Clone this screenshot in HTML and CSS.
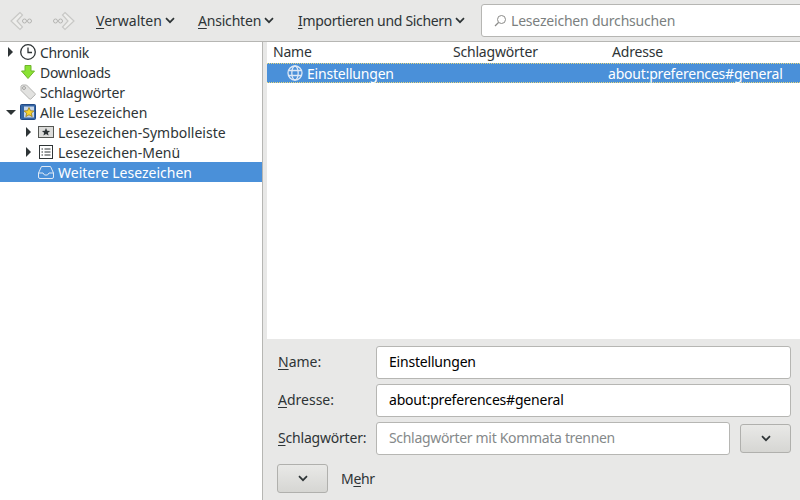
FILE: index.html
```html
<!DOCTYPE html>
<html lang="de">
<head>
<meta charset="utf-8">
<title>Bibliothek</title>
<link rel="stylesheet" href="styles.css">
</head>
<body>
<header class="toolbar">
  <div class="nav">
    <svg class="nav-icon" width="24" height="24" viewBox="0 0 24 24"><path d="M11 3.500 2 12l9 8.500 2.500-2.500L8 12l5.500-6z" fill="#eeeeec" stroke="#c8c8c6" stroke-width="1.200"/><circle cx="15.500" cy="12" r="2" fill="none" stroke="#b4b4b2"/><circle cx="20.500" cy="12" r="2" fill="none" stroke="#b4b4b2"/></svg>
    <svg class="nav-icon nav-next" width="24" height="24" viewBox="0 0 24 24"><path d="M13 3.500 22 12l-9 8.500-2.500-2.500L16 12l-5.500-6z" fill="#eeeeec" stroke="#c8c8c6" stroke-width="1.200"/><circle cx="8.500" cy="12" r="2" fill="none" stroke="#b4b4b2"/><circle cx="3.500" cy="12" r="2" fill="none" stroke="#b4b4b2"/></svg>
  </div>
  <div class="menu-btn menu-a wide"><span><u>V</u>erwalten</span><svg class="chev" width="10" height="7" viewBox="0 0 10 7"><path d="M1 1.200 5 5.200l4-4" /></svg></div>
  <div class="menu-btn menu-b"><span><u>A</u>nsichten</span><svg class="chev" width="10" height="7" viewBox="0 0 10 7"><path d="M1 1.200 5 5.200l4-4" /></svg></div>
  <div class="menu-btn menu-c tighter"><span><u>I</u>mportieren und Sichern</span><svg class="chev" width="10" height="7" viewBox="0 0 10 7"><path d="M1 1.200 5 5.200l4-4" /></svg></div>
  <div class="search">
    <svg width="14" height="14" viewBox="0 0 14 14"><circle cx="8.500" cy="5.500" r="4" fill="none" stroke="#8a8a88"/><path d="M5.500 8.500 2 12" stroke="#8a8a88" stroke-width="1.200"/></svg>
    <span>Lesezeichen durchsuchen</span>
  </div>
</header>
<main class="body">
  <nav class="tree">
    <div class="row tighter">
      <i class="tw closed"></i>
      <svg class="ic" width="18" height="18" viewBox="0 0 18 18"><circle cx="9" cy="9" r="7.300" fill="#fff" stroke="#2e3436" stroke-width="1.300"/><path d="M9 4.500V9.500H13" fill="none" stroke="#2e3436" stroke-width="1.300"/></svg>
      <span>Chronik</span>
    </div>
    <div class="row tighter">
      <i class="tw none"></i>
      <svg class="ic" width="18" height="18" viewBox="0 0 18 18"><path d="M6 2.500h6v5.500h3.500L9 15.500 2.500 8H6z" fill="#8ae234" stroke="#6fb52a"/></svg>
      <span>Downloads</span>
    </div>
    <div class="row">
      <i class="tw none"></i>
      <svg class="ic" width="18" height="18" viewBox="0 0 18 18"><path d="M2 3.200 3.200 2h4.300l8.500 8.500a1 1 0 0 1 0 1.400L11.900 16a1 1 0 0 1-1.400 0L2 7.500z" fill="#e2e2e0" stroke="#b4b4b2"/><circle cx="5" cy="5" r="1.400" fill="#fff" stroke="#9a9a98"/></svg>
      <span>Schlagwörter</span>
    </div>
    <div class="row wide">
      <i class="tw open"></i>
      <svg class="ic" width="18" height="18" viewBox="0 0 18 18"><rect x="1.500" y="1.500" width="15" height="15" rx="1" fill="#3465a4" stroke="#204a87"/><rect x="5" y="3.500" width="10" height="11" fill="#c7d6e8"/><path d="M10 4.500 11.500 7.700l3.400.3-2.600 2.200.9 3.400L10 11.800l-3.200 1.800.9-3.400L5.100 8l3.400-.3z" fill="#f7d52e" stroke="#8f6f0c" stroke-width=".7"/></svg>
      <span>Alle Lesezeichen</span>
    </div>
    <div class="row depth wide">
      <i class="tw closed"></i>
      <svg class="ic" width="18" height="18" viewBox="0 0 18 18"><rect x="1.500" y="3.500" width="15" height="11" fill="#dcdcda" stroke="#555753"/><path d="M9 5 10.200 7.700l2.900.2-2.200 1.900.7 2.800L9 11.100 6.400 12.600l.7-2.800-2.200-1.900 2.900-.2z" fill="#2e3436"/></svg>
      <span>Lesezeichen-Symbolleiste</span>
    </div>
    <div class="row depth wide">
      <i class="tw closed"></i>
      <svg class="ic" width="18" height="18" viewBox="0 0 18 18"><rect x="2.500" y="2.500" width="13" height="13" fill="#fff" stroke="#2e3436"/><path d="M4.500 6h1.500M7.500 6h6M4.500 9h1.500M7.500 9h6M4.500 12h1.500M7.500 12h6" stroke="#2e3436"/></svg>
      <span>Lesezeichen-Menü</span>
    </div>
    <div class="row depth wide selected">
      <i class="tw none"></i>
      <svg class="ic" width="18" height="18" viewBox="0 0 18 18"><path d="M1.500 10 4.500 3.500h9l3 6.500v4a1.500 1.500 0 0 1-1.500 1.500H3A1.500 1.500 0 0 1 1.500 14z" fill="none" stroke="#dfe9f5"/><path d="M1.500 10H6l1.500 2h3L12 10h4.500" fill="none" stroke="#dfe9f5"/></svg>
      <span>Weitere Lesezeichen</span>
    </div>
  </nav>
  <section class="right">
    <div class="list">
      <div class="cols">
        <span class="c-name">Name</span>
        <span class="c-tags">Schlagwörter</span>
        <span class="c-addr">Adresse</span>
      </div>
      <div class="item">
        <span class="i-name">
          <svg width="16" height="16" viewBox="0 0 16 16" fill="none" stroke="#dce8f6" stroke-width="1.300"><circle cx="8" cy="8" r="7"/><ellipse cx="8" cy="8" rx="3.200" ry="7"/><path d="M1.500 5.500h13M1.500 10.500h13"/></svg>
          <span>Einstellungen</span>
        </span>
        <span class="i-addr">about:preferences#general</span>
      </div>
    </div>
    <form class="details">
      <div class="field">
        <label class="wide"><u>N</u>ame:</label>
        <div class="input">Einstellungen</div>
      </div>
      <div class="field">
        <label class="wide"><u>A</u>dresse:</label>
        <div class="input">about:preferences#general</div>
      </div>
      <div class="field tags">
        <label><u>S</u>chlagwörter:</label>
        <div class="input placeholder tighter">Schlagwörter mit Kommata trennen</div>
        <div class="btn btn-tags"><svg class="chev" width="10" height="7" viewBox="0 0 10 7"><path d="M1 1.200 5 5.200l4-4" /></svg></div>
      </div>
      <div class="more">
        <div class="btn btn-more"><svg class="chev" width="10" height="7" viewBox="0 0 10 7"><path d="M1 1.200 5 5.200l4-4" /></svg></div>
        <span class="tighter">M<u>e</u>hr</span>
      </div>
    </form>
  </section>
</main>
</body>
</html>
```
FILE: styles.css
```css
* { box-sizing: border-box; }
html, body { margin: 0; height: 500px; overflow: hidden; }
body {
  width: 800px;
  font-family: "Noto Sans", sans-serif;
  font-size: 14px;
  letter-spacing: -0.2px;
  color: #2e3436;
  background: #e8e8e7;
  display: flex;
  flex-direction: column;
}
u { text-underline-offset: 2px; }
.wide { letter-spacing: 0; }
.tighter { letter-spacing: -0.32px; }

.toolbar {
  height: 42px;
  flex: none;
  display: flex;
  align-items: center;
  border-bottom: 1px solid #b6b6b3;
  background: #e8e8e7;
}
.nav { display: flex; width: 96px; padding-left: 9px; flex: none; }
.nav-next { margin-left: 19px; }
.menu-btn { display: flex; align-items: center; gap: 3px; flex: none; }
.menu-a { width: 102px; }
.menu-b { width: 100px; }
.menu-c { width: 183px; }
.chev { fill: none; stroke: #2e3436; stroke-width: 1.700; flex: none; }
.search {
  width: 325px;
  flex: none;
  height: 33px;
  display: flex;
  align-items: center;
  gap: 4px;
  padding-left: 11px;
  background: #fff;
  border: 1px solid #b6b6b3;
  border-radius: 3px;
  color: #7b7f7f;
}

.body { flex: 1; display: flex; min-height: 0; }
.tree {
  width: 263px;
  flex: none;
  background: #fff;
  border-right: 1px solid #b6b6b3;
}
.row { height: 20px; display: flex; align-items: center; }
.row .tw { margin-left: 8px; }
.row .ic { margin-left: 1px; margin-right: 3px; flex: none; }
.row .open { margin-left: 6px; margin-right: 2px; }
.row.depth .tw { margin-left: 26px; }
.selected { background: #4a90d9; color: #fff; }
.tw { width: 10px; height: 10px; flex: none; display: block; }
.closed { border-left: 5px solid #2e3436; border-top: 5px solid transparent; border-bottom: 5px solid transparent; width: 0; margin-right: 5px; }
.open { border-top: 5px solid #2e3436; border-left: 5px solid transparent; border-right: 5px solid transparent; height: 0; }
.none { visibility: hidden; }

.right { flex: 1; display: flex; flex-direction: column; min-width: 0; padding-left: 4px; }
.list { height: 297px; flex: none; background: #fff; }
.cols { height: 21px; display: flex; align-items: center; padding: 0 0 2px 6px; }
.c-name { width: 180px; }
.c-tags { width: 159px; }
.item {
  height: 20px;
  display: flex;
  align-items: center;
  background: #4a90d9;
  color: #fff;
  border-top: 1px dotted #e8d77a;
  border-bottom: 1px dotted #e8d77a;
}
.i-name { display: flex; align-items: center; gap: 4px; width: 341px; padding-left: 20px; }

.details { flex: 1; padding: 7px 9px 0 10px; display: flex; flex-direction: column; }
.field { display: flex; align-items: center; height: 33px; margin-bottom: 5px; }
.field label { width: 99px; flex: none; padding: 0 0 2px 1px; }
.input {
  flex: 1;
  height: 33px;
  display: flex;
  align-items: center;
  padding: 0 0 2px 12px;
  background: #fff;
  border: 1px solid #b6b6b3;
  border-radius: 3px;
  color: #000;
}
.placeholder { color: #85898a; }
.btn {
  height: 29px;
  display: flex;
  align-items: center;
  justify-content: center;
  border: 1px solid #b0b0ad;
  border-radius: 3px;
  background: linear-gradient(#e9e9e7, #d6d6d3);
  flex: none;
}
.btn-tags { width: 51px; margin-left: 10px; }
.more { display: flex; align-items: center; gap: 13px; margin-top: 4px; }
.btn-more { width: 51px; }
```
